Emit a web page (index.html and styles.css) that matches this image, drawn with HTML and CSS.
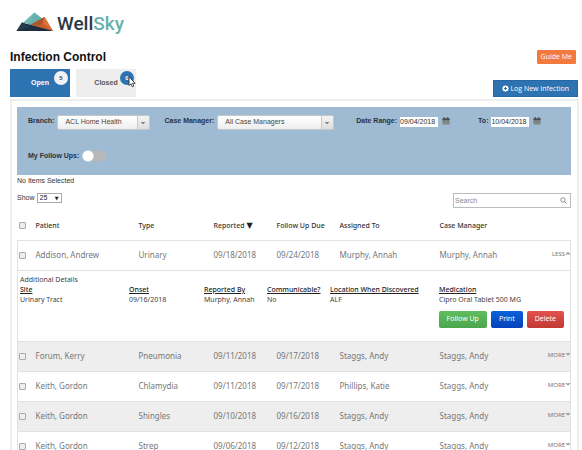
FILE: index.html
```html
<!DOCTYPE html>
<html lang="en">
<head>
<meta charset="utf-8">
<title>Infection Control</title>
<link rel="stylesheet" href="styles.css">
</head>
<body>
<svg class="defs" aria-hidden="true">
  <symbol id="calendar" viewBox="0 0 9 9">
    <path d="M.5 2.5h8v6h-8z" fill="#7d8480"/>
    <path d="M.5 1.5h8v2h-8z" fill="#474b4b"/>
    <path d="M2.5 0v2.5M6.5 0v2.5" stroke="#474b4b" stroke-width="1.2"/>
    <path d="M1 7h7" stroke="#9a9d94" stroke-width=".5"/>
  </symbol>
</svg>

<header class="brand">
  <svg class="brand-mark" viewBox="0 0 38 20" aria-hidden="true">
    <path d="M8 10 18.500 0.500 27 7 16 14z" fill="#64b1b0"/>
    <path d="M7 11 18.500 .5 14 11z" fill="#72b8b6"/>
    <path d="M15 12.500 28.500 5 37 19H26z" fill="#c9602a"/>
    <path d="M28.500 5 27 11.500 37 19z" fill="#d9733a"/>
    <path d="M15 12.500 28.500 5 26 11 24 14z" fill="#a95830"/>
    <path d="M.5 19 6 10.500 37 19z" fill="#1c2d40"/>
    <path d="M.5 19 6 10.500 15 15z" fill="#26394b"/>
  </svg>
  <span class="brand-name">Well<span class="brand-sky">Sky</span></span>
</header>

<main class="page">
  <div class="title-row">
    <h1>Infection Control</h1>
    <button class="guide" type="button">Guide Me</button>
  </div>

  <div class="tab-row">
    <nav class="tabs">
      <button class="tab tab-open" type="button">Open<span class="count">5</span></button>
      <button class="tab" type="button">Closed<span class="count count-blue">0</span>
        <svg class="pointer" viewBox="0 0 8 12" aria-hidden="true"><path d="M1 .8v8.700l2-1.700 1.300 3 1.500-.7-1.300-2.800h2.700z" fill="#fff" stroke="#222" stroke-width=".8"/></svg>
      </button>
    </nav>
    <button class="log" type="button">
      <svg viewBox="0 0 8 8" aria-hidden="true"><circle cx="4" cy="4" r="3.500" fill="#fff"/><path d="M4 2.300v3.400M2.300 4h3.400" stroke="#2d6fae" stroke-width="1.200"/></svg>
      Log New Infection
    </button>
  </div>

  <section class="panel">
    <form class="filters">
      <div class="field">
        <label for="branch">Branch:</label>
        <span class="picker"><select id="branch"><option>ACL Home Health</option></select></span>
      </div>
      <div class="field">
        <label for="manager">Case Manager:</label>
        <span class="picker picker-wide"><select id="manager"><option>All Case Managers</option></select></span>
      </div>
      <div class="field field-date">
        <label for="from">Date Range:</label>
        <input id="from" type="text" value="09/04/2018">
        <button class="cal" type="button" aria-label="Pick start date"><svg><use href="#calendar"/></svg></button>
      </div>
      <div class="field field-to">
        <label for="to">To:</label>
        <input id="to" type="text" value="10/04/2018">
        <button class="cal" type="button" aria-label="Pick end date"><svg><use href="#calendar"/></svg></button>
      </div>
      <div class="field field-toggle">
        <label for="mine">My Follow Ups:</label>
        <input id="mine" class="toggle" type="checkbox">
      </div>
    </form>

    <p class="selected">No Items Selected</p>

    <div class="tools">
      <label for="show">Show</label>
      <span class="count-picker"><select id="show"><option>25</option></select></span>
      <div class="search">
        <input type="search" placeholder="Search" aria-label="Search">
        <svg viewBox="0 0 8 8" aria-hidden="true"><circle cx="3.300" cy="3.300" r="2.500" fill="none" stroke="#666" stroke-width=".8"/><path d="M5.200 5.200 7.500 7.500" stroke="#666" stroke-width="1"/></svg>
      </div>
    </div>

    <table class="cases">
      <colgroup>
        <col class="c-check"><col class="c-patient"><col class="c-type"><col class="c-date"><col class="c-date"><col class="c-assigned"><col><col class="c-more">
      </colgroup>
      <thead>
        <tr>
          <th><input type="checkbox" aria-label="Select all"></th>
          <th>Patient</th><th>Type</th><th>Reported <span class="sort">▼</span></th><th>Follow Up Due</th><th>Assigned To</th><th>Case Manager</th><th></th>
        </tr>
      </thead>
      <tbody>
        <tr>
          <td><input type="checkbox" aria-label="Select Addison, Andrew"></td>
          <td>Addison, Andrew</td><td>Urinary</td><td>09/18/2018</td><td>09/24/2018</td><td>Murphy, Annah</td><td>Murphy, Annah</td>
          <td><button class="more less" type="button">LESS</button></td>
        </tr>
        <tr class="detail">
          <td colspan="8">
            <p>Additional Details</p>
            <dl>
              <div><dt>Site</dt><dd>Urinary Tract</dd></div>
              <div><dt>Onset</dt><dd>09/16/2018</dd></div>
              <div><dt>Reported By</dt><dd>Murphy, Annah</dd></div>
              <div><dt>Communicable?</dt><dd>No</dd></div>
              <div><dt>Location When Discovered</dt><dd>ALF</dd></div>
              <div><dt>Medication</dt><dd>Cipro Oral Tablet 500 MG</dd></div>
            </dl>
            <div class="actions">
              <button class="act act-follow" type="button">Follow Up</button>
              <button class="act act-print" type="button">Print</button>
              <button class="act act-delete" type="button">Delete</button>
            </div>
          </td>
        </tr>
        <tr class="shade">
          <td><input type="checkbox" aria-label="Select Forum, Kerry"></td>
          <td>Forum, Kerry</td><td>Pneumonia</td><td>09/11/2018</td><td>09/17/2018</td><td>Staggs, Andy</td><td>Staggs, Andy</td>
          <td><button class="more" type="button">MORE</button></td>
        </tr>
        <tr>
          <td><input type="checkbox" aria-label="Select Keith, Gordon"></td>
          <td>Keith, Gordon</td><td>Chlamydia</td><td>09/11/2018</td><td>09/17/2018</td><td>Phillips, Katie</td><td>Staggs, Andy</td>
          <td><button class="more" type="button">MORE</button></td>
        </tr>
        <tr class="shade">
          <td><input type="checkbox" aria-label="Select Keith, Gordon"></td>
          <td>Keith, Gordon</td><td>Shingles</td><td>09/10/2018</td><td>09/16/2018</td><td>Staggs, Andy</td><td>Staggs, Andy</td>
          <td><button class="more" type="button">MORE</button></td>
        </tr>
        <tr>
          <td><input type="checkbox" aria-label="Select Keith, Gordon"></td>
          <td>Keith, Gordon</td><td>Strep</td><td>09/06/2018</td><td>09/12/2018</td><td>Staggs, Andy</td><td>Staggs, Andy</td>
          <td><button class="more" type="button">MORE</button></td>
        </tr>
      </tbody>
    </table>
  </section>
</main>
</body>
</html>
```
FILE: styles.css
```css
* { box-sizing: border-box; }

body {
  height: 100vh;
  margin: 0;
  overflow: hidden;
  background: #fff;
  color: #333;
  font: 7px/10px "Liberation Sans", sans-serif;
}

h1, p, dl, dd { margin: 0; }
button, input, select { margin: 0; padding: 0; border: 0; font: inherit; color: inherit; }
svg { display: block; }
.defs { position: absolute; width: 0; height: 0; }

/* Brand */
.brand { display: flex; gap: 3px; padding: 12px 16px 0; height: 44px; }
.brand-mark { width: 38px; height: 20px; }
.brand-name { font: 500 19px/24px Roboto, sans-serif; color: #2b3a49; }
.brand-sky { color: #68b0ac; }

/* Title and tabs */
.page { padding: 0 3px 0 10px; }
.title-row { display: flex; justify-content: space-between; align-items: center; height: 25px; padding-right: 3px; }
h1 { font: bold 12px/14px "Liberation Sans", sans-serif; color: #111; }
.guide {
  height: 14px;
  padding: 0 4px;
  border-radius: 1px;
  background: #f37a3f;
  color: #fff;
  font: 7px/12px "Open Sans", sans-serif;
}
.tab-row { display: flex; justify-content: space-between; align-items: flex-end; height: 29px; padding: 0 1px 1px 0; }
.tabs { display: flex; gap: 6px; }
.tab {
  position: relative;
  width: 60px;
  height: 28px;
  background: #eee;
  color: #555;
  font-weight: bold;
}
.tab-open { background: #2d73b1; color: #fff; }
.count {
  position: absolute;
  top: 2px;
  right: 2px;
  width: 14px;
  height: 14px;
  border-radius: 50%;
  background: #f0f2f5;
  color: #444;
  font: bold 6px/14px "Liberation Sans", sans-serif;
}
.count-blue { background: #2d73b1; color: #fff; }
.pointer { position: absolute; top: 7px; right: 0; width: 8px; height: 12px; }
.log {
  display: flex;
  align-items: center;
  gap: 1px;
  height: 17px;
  padding: 0 8px;
  border: 1px solid #2568a5;
  background: #2d73b1;
  color: #fff;
  font: 500 7px/14px "Open Sans", sans-serif;
}
.log svg { width: 7px; height: 7px; }

/* Panel */
.panel { margin-top: 1px; padding: 6px 6px 0 5px; border: 2px solid #eee; }
.filters {
  display: flex;
  flex-wrap: wrap;
  align-content: flex-start;
  row-gap: 18px;
  height: 68px;
  padding: 7px 11px 0;
  background: #9fbad3;
  color: #26333f;
}
.field { display: flex; align-items: center; height: 16px; margin-right: 14px; }
.field label { margin-right: 3px; padding-bottom: 2px; font-weight: bold; line-height: 10px; }
.field-date { margin: 0 28px 0 8px; }
.field-to { margin-right: 0; }
.field-toggle { flex-basis: 100%; }
.field-toggle label { padding-bottom: 0; }
.picker { position: relative; width: 93px; }
.picker-wide { width: 117px; }
.picker select {
  appearance: none;
  display: block;
  width: 100%;
  height: 15px;
  padding-left: 7px;
  border: 1px solid #c3c8cd;
  border-radius: 2px;
  background: linear-gradient(#fff, #eee);
  color: #444;
}
.picker::after {
  content: "";
  position: absolute;
  top: 1px;
  right: 1px;
  width: 11px;
  height: 13px;
  border-left: 1px solid #c3c8cd;
  background: linear-gradient(#888, #888) 3px 6px / 4px 1px no-repeat, linear-gradient(#888, #888) 4px 7px / 2px 1px no-repeat, linear-gradient(#f4f4f4, #ddd);
  pointer-events: none;
}
.field input[type="text"] { width: 38px; height: 10px; background: #fff; color: #333; }
.cal { width: 8px; height: 8px; margin: 0 0 2px 4px; background: none; }
.cal svg { width: 8px; height: 8px; }
.toggle {
  appearance: none;
  width: 24px;
  height: 12px;
  background: radial-gradient(circle at 6px 6px, #fff 5px, transparent 6px), linear-gradient(#b8b8b8, #b8b8b8) 6px 1px / 18px 10px no-repeat;
}
.selected { padding-top: 1px; }

/* Table tools */
.tools { display: flex; align-items: flex-start; gap: 2px; height: 17px; margin-top: 7px; }
.count-picker { position: relative; width: 25px; }
.count-picker select {
  appearance: none;
  display: block;
  width: 100%;
  height: 10px;
  padding-left: 2px;
  border: 1px solid #aaa;
  background: #fff;
  color: #222;
  line-height: 8px;
}
.count-picker::after { content: "▼"; position: absolute; top: 0; right: 3px; font: 5px/10px "DejaVu Sans", sans-serif; color: #222; pointer-events: none; }
.search {
  display: flex;
  align-items: center;
  width: 118px;
  height: 15px;
  margin-left: auto;
  padding: 0 3px 0 1px;
  border: 1px solid #bbb;
}
.search input { flex: 1; min-width: 0; background: none; font-size: 7px; }
.search input::placeholder { color: #888; }
.search svg { width: 7px; height: 7px; }

/* Cases */
.cases {
  width: 100%;
  table-layout: fixed;
  border-collapse: collapse;
  font: 8px/10px "Noto Sans", sans-serif;
  color: #777;
}
.c-check { width: 18px; }
.c-patient { width: 103px; }
.c-type { width: 75px; }
.c-date { width: 63px; }
.c-assigned { width: 100px; }
.c-more { width: 28px; }
.cases th, .cases td { height: 30px; padding: 0; text-align: left; vertical-align: middle; white-space: nowrap; }
.cases th { padding-top: 2px; font-weight: 500; font-size: 7px; color: #333; }
.cases tbody tr { border: 1px solid #e2e2e2; }
.cases .shade { background: #eee; }
.sort { font: 8px/8px "DejaVu Sans", sans-serif; color: #222; }
.cases input {
  appearance: none;
  display: block;
  width: 7px;
  height: 7px;
  margin-left: 1px;
  border: 1px solid #aaa;
  border-radius: 1px;
  background: #eee;
}
.more { display: flex; gap: 1px; margin-left: auto; padding-bottom: 3px; background: none; font-size: 6px; line-height: 8px; }
.more::after { content: ""; width: 4px; height: 3px; margin-top: 2px; background: #888; clip-path: polygon(0 0, 50% 40%, 100% 0, 100% 30%, 50% 100%, 0 30%); }
.less::after { transform: scaleY(-1); }
.cases .detail td { height: 71px; padding: 4px 6px 0 2px; vertical-align: top; font-size: 7px; color: #444; }
.detail dl { display: grid; grid-template-columns: 109px 75px 63px 63px 109px 1fr; }
.detail dt { color: #222; text-decoration: underline; font-weight: 500; }
.actions { display: flex; justify-content: flex-end; gap: 4px; margin-top: 6px; }
.act { height: 17px; padding: 0 8px; border-radius: 2px; color: #fff; font-size: 7px; line-height: 16px; }
.act-follow { background: linear-gradient(#5fbd5f, #4da64d); }
.act-print { background: linear-gradient(#0a62d8, #0541bd); }
.act-delete { background: linear-gradient(#e2524e, #c13a33); }
```
